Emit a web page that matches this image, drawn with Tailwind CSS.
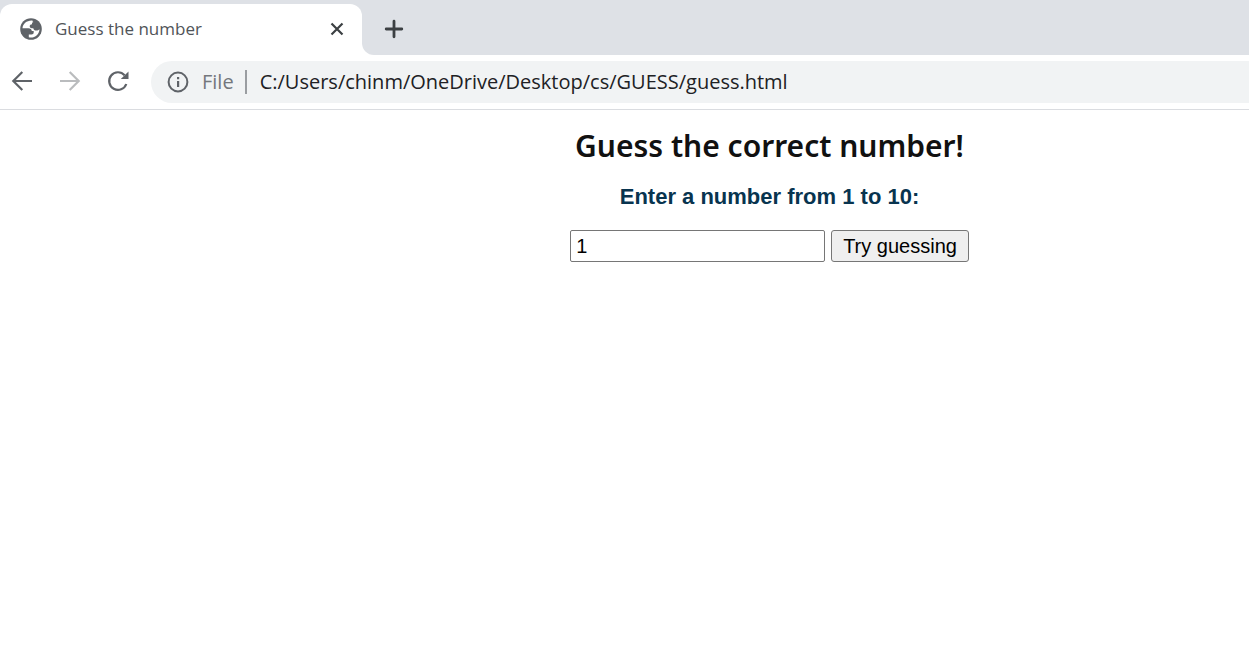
<!DOCTYPE html>
<html lang="en">
<head>
<meta charset="utf-8">
<meta name="viewport" content="width=device-width, initial-scale=1">
<title>Guess the number</title>
<script src="https://cdn.jsdelivr.net/npm/@tailwindcss/browser@4"></script>
</head>
<body class="min-h-screen overflow-x-hidden bg-white font-['Open_Sans',sans-serif]">
<header class="border-b border-[#dadce0]">
  <div class="flex h-[55px] bg-white">
    <div class="w-[362px] shrink-0 bg-[#dee1e6] pt-1">
      <div class="flex h-[51px] items-center rounded-t-xl bg-white pr-[18px] pb-0.5 pl-5">
        <svg class="size-[22px] shrink-0" viewBox="0 0 22 22" aria-hidden="true">
          <circle cx="11" cy="11" r="10.8" fill="#5f6368"/>
          <path fill="#fff" d="M12.500 2.500C7 2 2.700 5.800 2.500 10.300h5.800c2.200 0 3.500 1.200 3.500 2.800h1.900v1.400c0 1.200-.8 2-2.200 2H8.800v2.800c5.500 1.200 10.500-2.700 10.700-8.100-1 1-2 1.500-3.300 1.400-1.700-.1-2.600-.9-2.900-2.400-2 0-3.600-.4-3.600-1.800 0-1.500 1-2 2.300-2.200 0-1.300.2-1.700 1.500-2.100-.8-.4-1.100-.9-1-1.600Z"/>
        </svg>
        <span class="ml-[13px] flex-1 text-[17px] leading-6 text-[#505458]">Guess the number</span>
        <button class="size-[14px]" aria-label="Close tab">
          <svg class="size-[14px]" viewBox="0 0 14 14" fill="none" stroke="#3c4043" stroke-width="2.2" aria-hidden="true"><path d="m1.500 1.500 11 11m0-11-11 11"/></svg>
        </button>
      </div>
    </div>
    <div class="flex flex-1 items-center rounded-bl-xl bg-[#dee1e6] pt-[3px] pl-[22px]">
      <button class="size-5" aria-label="New tab">
        <svg class="size-5" viewBox="0 0 20 20" fill="none" stroke="#3c4043" stroke-width="2.800" stroke-linecap="round" aria-hidden="true"><path d="M10 2.200v15.600M2.200 10h15.600"/></svg>
      </button>
    </div>
  </div>
  <div class="flex h-[54px] items-center pl-[11px]">
    <nav class="flex shrink-0 gap-[26px] pb-0.5" aria-label="History">
      <button class="size-[22px]" aria-label="Back">
        <svg class="size-[22px]" viewBox="0 0 22 22" fill="none" stroke="#5f6368" stroke-width="2.200" aria-hidden="true"><path d="M21 11H2.500M11.300 2 2.300 11l9 9"/></svg>
      </button>
      <button class="size-[22px]" aria-label="Forward" disabled>
        <svg class="size-[22px]" viewBox="0 0 22 22" fill="none" stroke="#babcbe" stroke-width="2.200" aria-hidden="true"><path d="M1 11h18.500M10.700 2l9 9-9 9"/></svg>
      </button>
      <button class="size-[22px]" aria-label="Reload">
        <svg class="size-[22px]" viewBox="0 0 22 22" aria-hidden="true"><path d="M19.300 14A8.800 8.800 0 1 1 17.600 5.200" fill="none" stroke="#5f6368" stroke-width="2.200"/><path d="M21.500 1.400v7.700h-7.700Z" fill="#5f6368"/></svg>
      </button>
    </nav>
    <div class="ml-[22px] flex h-[42px] flex-1 items-center rounded-l-full bg-[#f1f3f4] pl-4">
      <svg class="size-[22px] shrink-0" viewBox="0 0 22 22" aria-hidden="true"><circle cx="11" cy="11" r="9.400" fill="none" stroke="#5f6368" stroke-width="2"/><path d="M10 6h2.200v2.200H10zM10 10h2.200v6H10z" fill="#5f6368"/></svg>
      <label for="url" class="ml-[13px] text-xl text-[#74777c]">File</label>
      <span class="ml-[11px] h-6 w-0.5 shrink-0 bg-[#9a9da1]"></span>
      <input id="url" type="text" value="C:/Users/chinm/OneDrive/Desktop/cs/GUESS/guess.html" class="ml-[13px] min-w-0 flex-1 bg-transparent text-xl text-[#202124] outline-none">
    </div>
  </div>
</header>
<main class="flex flex-col items-center pt-[18px] pl-[290px]">
  <h1 class="font-['Noto_Sans',sans-serif] text-3xl leading-9 font-semibold text-[#111]">Guess the correct number!</h1>
  <form class="flex flex-col items-center">
    <label for="guess" class="mt-[18px] font-['Liberation_Sans',Arial,sans-serif] text-[22px] leading-[30px] font-bold text-[#08344f]">Enter a number from 1 to 10:</label>
    <div class="mt-[18px] flex gap-1.5 font-['Liberation_Sans',Arial,sans-serif] text-xl text-black">
      <input id="guess" type="text" value="1" class="h-8 w-[255px] rounded-[2px] border border-[#767676] bg-white px-[5px] outline-none">
      <button type="button" class="h-8 rounded-[3px] border border-[#767676] bg-[#efefef] px-[11px] whitespace-nowrap">Try guessing</button>
    </div>
  </form>
</main>
</body>
</html>
